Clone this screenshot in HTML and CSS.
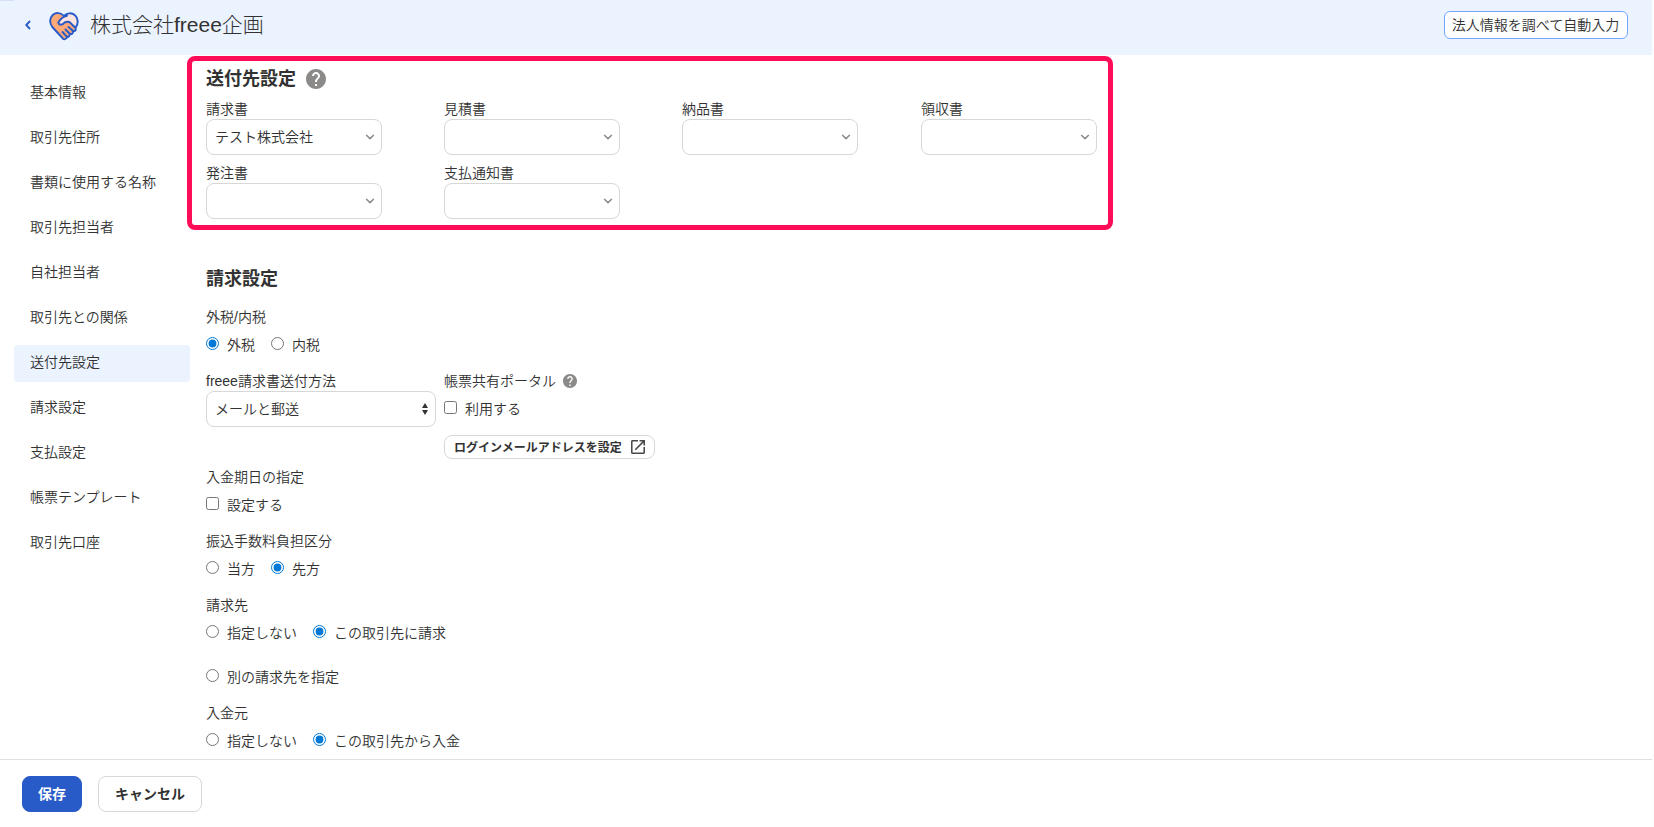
FILE: index.html
```html
<!DOCTYPE html>
<html lang="ja">
<head>
    <meta charset="UTF-8">
    <meta name="viewport" content="width=device-width, initial-scale=1.0">
    <title>株式会社freee企画</title>
    <link rel="stylesheet" href="styles.css">
</head>
<body>
    <div class="page">
    <header class="header">
        <a class="back" href="#">
            <svg width="6" height="10" viewBox="0 0 6 10"><path d="M5 1L1.2 5L5 9" fill="none" stroke="#285ac8" stroke-width="1.9"/></svg>
        </a>
        <svg class="logo" width="30" height="29" viewBox="0 0 30 29">
            <path d="M15 4C12 .5 7 .2 4 2.8C.4 6 .3 11 3.300 15L13 25.500C14.500 27.800 16 28 17.500 26L25.500 17.500C29.500 13 30 7 26 3.300C22.500 .3 18 .8 15 4Z" fill="#ffa878"/>
            <path d="M15 4C18 .8 22.500 .3 26 3.300C29.500 6.500 29.500 11.500 27 15L20 9L14 12.500L10 10.500Z" fill="#ffe4e0"/>
            <path d="M10 11C10.500 13.500 13.500 13.500 15.500 10.500C18 9.500 20 9.500 21.500 11L25.500 15.500L17 25L8 18Z" fill="#ffa878"/>
            <path d="M18 3.800C14.500 4.500 11 7.500 9.300 10.500C10 13.500 13.500 13.500 15.500 10.500C18 9.500 20 9.500 21.500 11L26 15.500C28 18 25.500 20 23.500 18.500C25 21 22.500 23 20.500 21.500C21.500 24 19.500 25.500 17.700 24.500" fill="none" stroke="#285ac8" stroke-width="1.900" stroke-linecap="round" stroke-linejoin="round"/>
            <path d="M15 4C12 .5 7 .2 4 2.800C.4 6 .3 11 3.300 15L13 25.500C14.500 27.800 16 28 17.500 26L19 24.500M15 4C18 .8 22.500 .3 26 3.300C29.500 6.500 29.500 11.500 26.700 15.500M19.500 15L23.500 18.500M16.500 17.500L20.500 21.500M13.500 20L17.500 24.300" fill="none" stroke="#285ac8" stroke-width="1.900" stroke-linecap="round" stroke-linejoin="round"/>
        </svg>
        <h1 class="company">株式会社freee企画</h1>
        <button class="lookup">法人情報を調べて自動入力</button>
    </header>

    <div class="content">
        <nav class="sidebar">
            <a class="menu">基本情報</a>
            <a class="menu">取引先住所</a>
            <a class="menu">書類に使用する名称</a>
            <a class="menu">取引先担当者</a>
            <a class="menu">自社担当者</a>
            <a class="menu">取引先との関係</a>
            <a class="menu active">送付先設定</a>
            <a class="menu">請求設定</a>
            <a class="menu">支払設定</a>
            <a class="menu">帳票テンプレート</a>
            <a class="menu">取引先口座</a>
        </nav>

        <main class="main">
            <section class="section highlight">
                <h2 class="heading">送付先設定
                    <svg class="help" width="20" height="20" viewBox="2 2 20 20"><path fill="#8c8989" d="M12 2C6.480 2 2 6.480 2 12s4.480 10 10 10 10-4.480 10-10S17.520 2 12 2zm1 17h-2v-2h2v2zm2.070-7.750l-.9.920C13.450 12.900 13 13.500 13 15h-2v-.5c0-1.100.45-2.100 1.170-2.830l1.240-1.260c.37-.36.59-.86.59-1.410 0-1.100-.9-2-2-2s-2 .9-2 2H8c0-2.210 1.790-4 4-4s4 1.790 4 4c0 .88-.36 1.680-.93 2.250z"/></svg>
                </h2>
                <div class="dest-grid">
                    <div class="field">
                        <span class="label">請求書</span>
                        <div class="combo">テスト株式会社<svg class="arrow" width="10" height="6" viewBox="0 0 10 6"><path d="M1.200 1L5 4.600L8.800 1"/></svg></div>
                    </div>
                    <div class="field">
                        <span class="label">見積書</span>
                        <div class="combo"><svg class="arrow" width="10" height="6" viewBox="0 0 10 6"><path d="M1.200 1L5 4.600L8.800 1"/></svg></div>
                    </div>
                    <div class="field">
                        <span class="label">納品書</span>
                        <div class="combo"><svg class="arrow" width="10" height="6" viewBox="0 0 10 6"><path d="M1.200 1L5 4.600L8.800 1"/></svg></div>
                    </div>
                    <div class="field">
                        <span class="label">領収書</span>
                        <div class="combo"><svg class="arrow" width="10" height="6" viewBox="0 0 10 6"><path d="M1.200 1L5 4.600L8.800 1"/></svg></div>
                    </div>
                    <div class="field">
                        <span class="label">発注書</span>
                        <div class="combo"><svg class="arrow" width="10" height="6" viewBox="0 0 10 6"><path d="M1.200 1L5 4.600L8.800 1"/></svg></div>
                    </div>
                    <div class="field">
                        <span class="label">支払通知書</span>
                        <div class="combo"><svg class="arrow" width="10" height="6" viewBox="0 0 10 6"><path d="M1.200 1L5 4.600L8.800 1"/></svg></div>
                    </div>
                </div>
            </section>

            <section class="section billing">
                <h2 class="heading">請求設定</h2>
                <div class="stack">
                    <div class="field">
                        <span class="label">外税/内税</span>
                        <div class="choices">
                            <label class="choice"><input type="radio" name="tax" checked>外税</label>
                            <label class="choice"><input type="radio" name="tax">内税</label>
                        </div>
                    </div>
                    <div class="columns">
                        <div class="field">
                            <span class="label">freee請求書送付方法</span>
                            <div class="combo wide">メールと郵送<svg width="6" height="12" viewBox="0 0 6 12"><path fill="#323232" d="M3 0L6 5H0ZM3 12L0 7H6Z"/></svg></div>
                        </div>
                        <div class="field">
                            <span class="label">帳票共有ポータル
                                <svg class="help small" width="14" height="14" viewBox="2 2 20 20"><path fill="#8c8989" d="M12 2C6.480 2 2 6.480 2 12s4.480 10 10 10 10-4.480 10-10S17.520 2 12 2zm1 17h-2v-2h2v2zm2.070-7.750l-.9.920C13.450 12.900 13 13.500 13 15h-2v-.5c0-1.100.45-2.100 1.170-2.830l1.240-1.260c.37-.36.59-.86.59-1.410 0-1.100-.9-2-2-2s-2 .9-2 2H8c0-2.210 1.790-4 4-4s4 1.790 4 4c0 .88-.36 1.680-.93 2.250z"/></svg>
                            </span>
                            <div class="choices">
                                <label class="choice"><input type="checkbox">利用する</label>
                            </div>
                            <button class="login-mail">ログインメールアドレスを設定
                                <svg width="14" height="14" viewBox="3 3 18 18"><path fill="#4a4a4a" d="M19 19H5V5h7V3H5c-1.110 0-2 .9-2 2v14c0 1.100.89 2 2 2h14c1.100 0 2-.9 2-2v-7h-2v7zM14 3v2h3.590l-9.830 9.830 1.410 1.410L19 6.410V10h2V3h-7z"/></svg>
                            </button>
                        </div>
                    </div>
                    <div class="field">
                        <span class="label">入金期日の指定</span>
                        <div class="choices">
                            <label class="choice"><input type="checkbox">設定する</label>
                        </div>
                    </div>
                    <div class="field">
                        <span class="label">振込手数料負担区分</span>
                        <div class="choices">
                            <label class="choice"><input type="radio" name="fee">当方</label>
                            <label class="choice"><input type="radio" name="fee" checked>先方</label>
                        </div>
                    </div>
                    <div class="field">
                        <span class="label">請求先</span>
                        <div class="choices">
                            <label class="choice"><input type="radio" name="billto">指定しない</label>
                            <label class="choice"><input type="radio" name="billto" checked>この取引先に請求</label>
                            <label class="choice"><input type="radio" name="billto">別の請求先を指定</label>
                        </div>
                    </div>
                    <div class="field">
                        <span class="label">入金元</span>
                        <div class="choices">
                            <label class="choice"><input type="radio" name="payer">指定しない</label>
                            <label class="choice"><input type="radio" name="payer" checked>この取引先から入金</label>
                        </div>
                    </div>
                </div>
            </section>
        </main>
    </div>

    <footer class="footer">
        <button class="btn save">保存</button>
        <button class="btn cancel">キャンセル</button>
    </footer>
    </div>
</body>
</html>
```

FILE: styles.css
```css
*{
    box-sizing: border-box;
}
body{
    margin: 0;
    background-color: #fcfcfc;
    color: #323232;
    font-family: "Liberation Sans", "Noto Sans CJK JP", sans-serif;
    font-size: 14px;
    line-height: 20px;
}
button{
    font-family: inherit;
    color: #323232;
    cursor: pointer;
}
.page{
    display: flex;
    flex-direction: column;
    width: 1652px;
    height: 827px;
    background-color: white;
    overflow: hidden;
}
.header{
    position: relative;
    display: flex;
    align-items: center;
    flex-shrink: 0;
    height: 55px;
    padding: 0 24px 5px 25px;
    background-color: #ebf3ff;
}
.header::before{
    content: "";
    position: absolute;
    top: 0;
    left: 0;
    width: 14px;
    height: 1px;
    background-color: #d3e0f8;
}
.back{
    display: flex;
}
.logo{
    margin-left: 18px;
    margin-top: 2px;
}
.company{
    margin: 0 0 1px 11px;
    font-size: 21px;
    font-weight: 300;
    line-height: 30px;
}
.lookup{
    width: 184px;
    height: 28px;
    margin-left: auto;
    padding: 0 1px 2px 0;
    border: 1px solid #73a5ff;
    border-radius: 6px;
    background-color: white;
    font-size: 14px;
    font-weight: 350;
}
.content{
    display: flex;
    flex: 1;
    min-height: 0;
}
.sidebar{
    display: flex;
    flex-direction: column;
    gap: 8px;
    width: 187px;
    padding: 20px 0 0 14px;
    flex-shrink: 0;
}
.menu{
    width: 176px;
    height: 37px;
    padding-left: 16px;
    border-radius: 4px;
    line-height: 35px;
    font-weight: 350;
}
.active{
    background-color: #ebf3ff;
}
.main{
    width: 926px;
    padding-top: 1px;
    font-weight: 350;
}
.highlight{
    height: 174px;
    padding: 4px 0 0 14px;
    border: 5px solid #ff0c58;
    border-radius: 8px;
}
.billing{
    padding: 35px 0 0 19px;
}
.heading{
    display: flex;
    align-items: center;
    gap: 10px;
    height: 28px;
    margin: 0 0 6px;
    font-size: 18px;
}
.billing .heading{
    margin-bottom: 14px;
}
.dest-grid{
    display: grid;
    grid-template-columns: 238px 238px 239px 176px;
    row-gap: 8px;
}
.label{
    display: flex;
    align-items: center;
    gap: 7px;
    height: 20px;
    line-height: 18px;
    padding-bottom: 1px;
}
.small{
    margin-top: 1px;
}
.combo{
    display: flex;
    align-items: center;
    justify-content: space-between;
    width: 176px;
    height: 36px;
    padding: 0 6px 0 8px;
    border: 1px solid #d7d7d7;
    border-radius: 8px;
}
.wide{
    width: 230px;
    padding-right: 7px;
}
.arrow{
    margin-left: auto;
    fill: none;
    stroke: #8c8989;
    stroke-width: 1.500;
}
.stack{
    display: flex;
    flex-direction: column;
    gap: 8px;
}
.columns{
    display: flex;
    gap: 8px;
}
.choices{
    display: flex;
    flex-wrap: wrap;
    gap: 8px 16px;
    width: 260px;
}
.choice{
    display: flex;
    align-items: center;
    height: 36px;
}
.choice input{
    width: 13px;
    height: 13px;
    margin: 0 8px 3px 0;
    accent-color: #0078d7;
}
.login-mail{
    display: flex;
    align-items: center;
    justify-content: space-between;
    width: 211px;
    height: 24px;
    margin-top: 8px;
    padding: 0 9px 1px;
    border: 1px solid #d7d7d7;
    border-radius: 8px;
    background-color: white;
    font-size: 12px;
    font-weight: bold;
}
.footer{
    display: flex;
    gap: 16px;
    height: 68px;
    flex-shrink: 0;
    padding: 16px 22px;
    border-top: 1px solid #dfe1e1;
}
.btn{
    height: 36px;
    padding: 0 16px 2px;
    border: 1px solid #d7d7d7;
    border-radius: 8px;
    background-color: white;
    font-size: 14px;
    font-weight: bold;
}
.save{
    width: 60px;
    padding: 0 0 2px;
    border-color: #285ac8;
    background-color: #285ac8;
    color: white;
}
```
